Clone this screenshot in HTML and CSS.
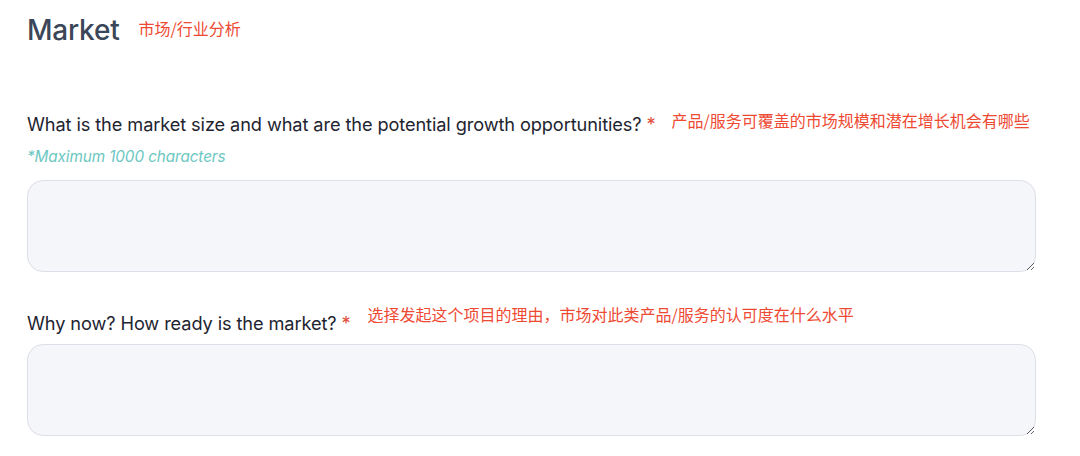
FILE: index.html
```html
<!DOCTYPE html>
<html lang="en">
<head>
<meta charset="utf-8">
<link rel="stylesheet" href="styles.css">
</head>
<body>
<div class="page">
  <div class="title-row">
    <h1 class="title">Market</h1>
    <span class="note note-title">市场/行业分析</span>
  </div>

  <div class="field field-1">
    <div class="label-row">
      <label class="label">What is the market size and what are the potential growth opportunities? <span class="req">*</span></label>
      <span class="note note-q1">产品/服务可覆盖的市场规模和潜在增长机会有哪些</span>
    </div>
    <div class="hint">*Maximum 1000 characters</div>
    <textarea class="input"></textarea>
  </div>

  <div class="field field-2">
    <div class="label-row">
      <label class="label">Why now? How ready is the market? <span class="req">*</span></label>
      <span class="note note-q2">选择发起这个项目的理由，市场对此类产品/服务的认可度在什么水平</span>
    </div>
    <textarea class="input input-2"></textarea>
  </div>
</div>
</body>
</html>
```
FILE: styles.css
```css
html, body {
  margin: 0;
  padding: 0;
  background: #ffffff;
}
.page {
  padding: 12px 0 0 27px;
  width: 1009px;
  font-family: Inter, "Noto Sans CJK SC", sans-serif;
}
.title-row {
  display: flex;
  align-items: flex-start;
  gap: 19px;
  height: 40px;
}
.title {
  margin: 0;
  font-size: 28px;
  font-weight: 500;
  color: #3b4658;
  line-height: 36px;
  letter-spacing: -0.2px;
}
.note {
  font-family: "Noto Sans CJK SC", sans-serif;
  color: #ee4a33;
  font-size: 16px;
  line-height: 20px;
}
.note-title {
  margin-top: 6px;
}
.field-1 {
  margin-top: 60px;
}
.label-row {
  display: flex;
  align-items: flex-start;
}
.label {
  font-size: 18.2px;
  color: #1e2430;
  line-height: 24px;
  letter-spacing: -0.1px;
}
.req {
  color: #e2503c;
}
.note-q1 {
  margin-left: 16px;
  margin-top: -2px;
}
.note-q2 {
  margin-left: 17px;
  margin-top: -7px;
}
.hint {
  margin-top: 11px;
  font-size: 15.3px;
  font-style: italic;
  color: #6cc7c2;
  line-height: 20px;
  letter-spacing: -0.1px;
}
.input {
  display: block;
  box-sizing: border-box;
  width: 1009px;
  height: 92px;
  margin: 13px 0 0 0;
  background: #f5f6f9;
  border: 1px solid #dcdfe7;
  border-radius: 16px;
  padding: 10px 14px;
  font-family: Inter, sans-serif;
  font-size: 16px;
  outline: none;
}
.field-2 {
  margin-top: 39px;
}
.input.input-2 {
  margin-top: 9px;
}
```
